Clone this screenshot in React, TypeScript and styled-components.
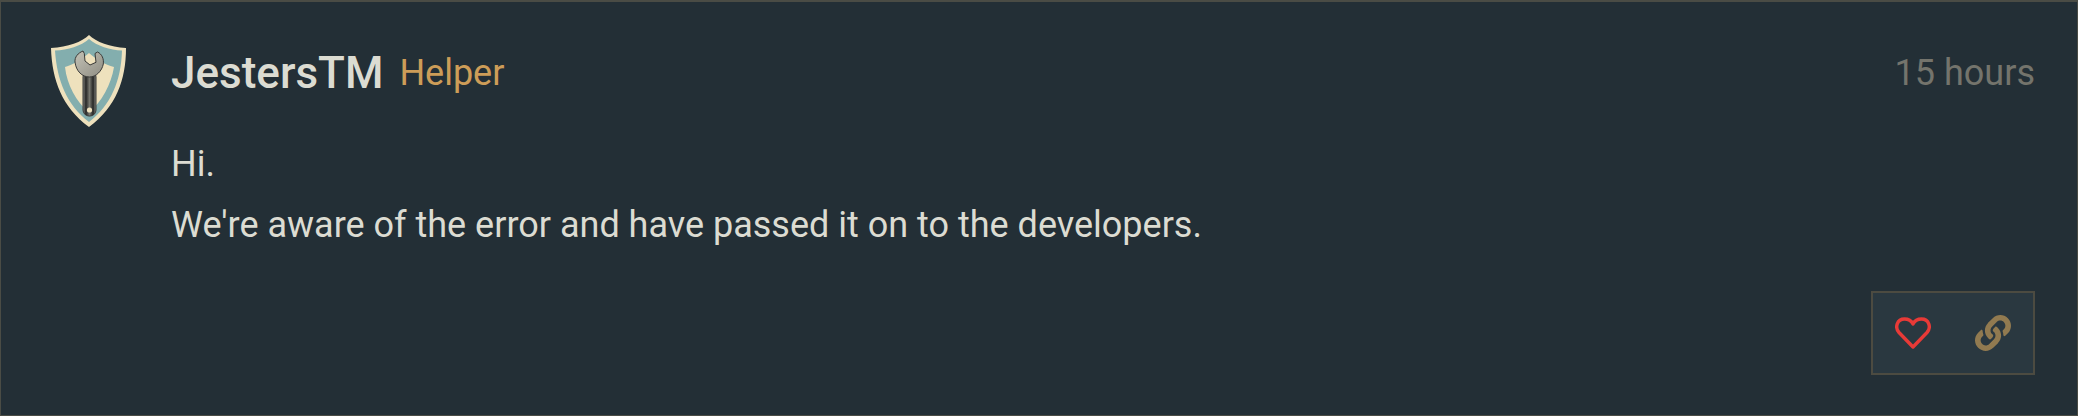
import React from "react";
import styled, { createGlobalStyle } from "styled-components";
import { FaLink } from "react-icons/fa";

const Global = createGlobalStyle`
  html, body { margin: 0; padding: 0; background: #232f36; }
  body { font-family: Roboto, "Liberation Sans", sans-serif; }
`;

const Post = styled.article`
  box-sizing: border-box;
  width: 2078px;
  height: 416px;
  display: flex;
  background: #232f36;
  border: 1px solid #4a4c45;
  border-top-width: 2px;
  padding: 33px 42px 40px 49px;
`;

const AvatarCol = styled.div`
  width: 121px;
  flex: none;
`;

const Main = styled.div`
  flex: 1;
  display: flex;
  flex-direction: column;
`;

const Header = styled.header`
  display: flex;
  align-items: center;
  height: 76px;
`;

const Name = styled.span`
  font-size: 44px;
  font-weight: 500;
  color: #dcdcd2;
  margin-right: 16px;
`;

const Role = styled.span`
  font-size: 36px;
  color: #cd9d58;
`;

const Time = styled.span`
  margin-left: auto;
  font-size: 36px;
  color: #74746c;
`;

const Body = styled.div`
  margin-top: 23px;
  font-size: 36px;
  line-height: 61px;
  color: #dcdcd2;
`;

const Line = styled.p`
  margin: 0;
`;

const Actions = styled.div`
  margin-top: auto;
  align-self: flex-end;
  box-sizing: border-box;
  width: 164px;
  height: 84px;
  display: flex;
  align-items: center;
  justify-content: space-between;
  padding: 0 22px 0 22px;
  background: #2a3840;
  border: 2px solid #4c4b41;
  color: #917a50;
`;

const Shield = () => (
  <svg width="78" height="94" viewBox="0 0 78 94">
    <defs>
      <linearGradient id="handle" x1="0" x2="1" y1="0" y2="0">
        <stop offset="0" stopColor="#8a8a84" />
        <stop offset="0.22" stopColor="#262625" />
        <stop offset="0.5" stopColor="#77776f" />
        <stop offset="0.78" stopColor="#262625" />
        <stop offset="1" stopColor="#8a8a84" />
      </linearGradient>
      <linearGradient id="head" x1="0" x2="1" y1="0" y2="1">
        <stop offset="0" stopColor="#c4c2b6" />
        <stop offset="1" stopColor="#8f8d83" />
      </linearGradient>
    </defs>
    <path d="M39 0 C46 7 60 12 76 13 C76 45 66 72 39 92 C12 72 2 45 1 13 C18 12 32 7 39 0Z" fill="#eee1bd" />
    <path d="M39 4 C47 11 60 15 72 15.5 C71 46 61 70 39 87 C17 70 7 46 5 15.5 C18 15 31 11 39 4Z" fill="#83aeae" />
    <path d="M39 18 C46 24 55 30 64 32 C61 50 52 66 39 78 C26 66 17 50 15 32 C23 30 32 24 39 18Z" fill="#eee1bd" />
    <rect x="33" y="36" width="13" height="45" rx="6" fill="url(#handle)" stroke="#3a3a38" strokeWidth="1" />
    <circle cx="39.5" cy="75" r="2.6" fill="#eee1bd" />
    <path d="M33 16 L34.3 18.5 L35 26 L40 30 L46 27.3 L45 18.5 L47.5 17 C52 19 54 24 53.3 29 C52 36 46 42 39.5 42 C32 42 26 36 25 27 C24.5 22 28 18 33 16Z" fill="url(#head)" stroke="#3a3a38" strokeWidth="1" />
  </svg>
);

const Heart = () => (
  <svg width="36" height="32" viewBox="0 0 36 32" fill="none">
    <path d="M18 30 L4 15.5 C-0.5 10.5 2 2 9.5 2 C13.5 2 16.5 4 18 7 C19.5 4 22.5 2 26.5 2 C34 2 36.5 10.5 32 15.5 Z" stroke="#e83a37" strokeWidth="3.4" strokeLinejoin="round" />
  </svg>
);

export default function App() {
  return (
    <>
      <Global />
      <Post>
        <AvatarCol><Shield /></AvatarCol>
        <Main>
          <Header>
            <Name>JestersTM</Name>
            <Role>Helper</Role>
            <Time>15 hours</Time>
          </Header>
          <Body>
            <Line>Hi.</Line>
            <Line>We're aware of the error and have passed it on to the developers.</Line>
          </Body>
          <Actions>
            <Heart />
            <FaLink size={36} />
          </Actions>
        </Main>
      </Post>
    </>
  );
}
